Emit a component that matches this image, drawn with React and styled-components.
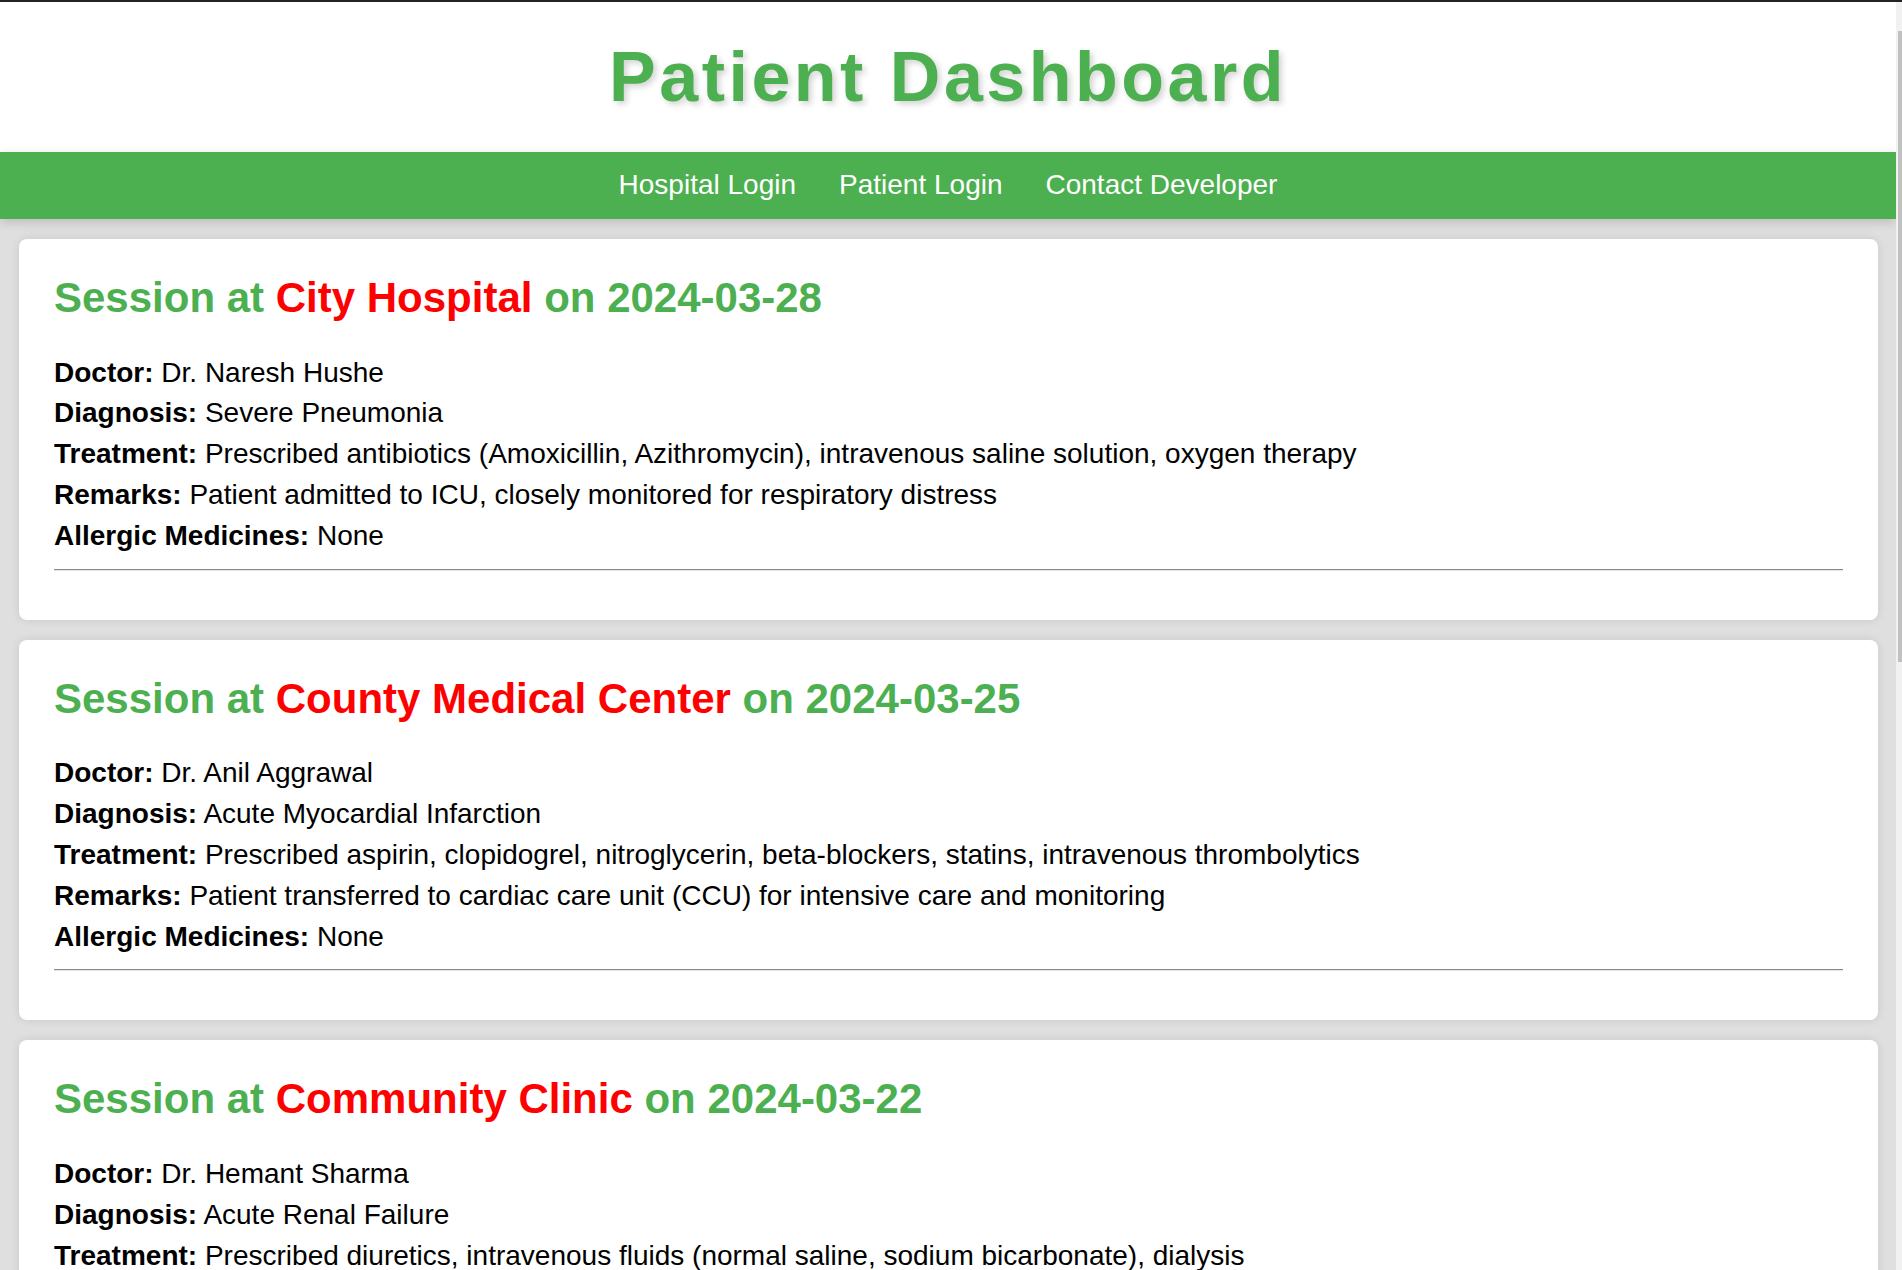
import React from "react";
import styled, { createGlobalStyle } from "styled-components";

const GlobalStyle = createGlobalStyle`
  html, body {
    margin: 0;
    padding: 0;
  }

  body {
    background-color: #dfdfdf;
    font-family: "Liberation Sans", Arial, sans-serif;
    font-size: 28px;
    color: #000;
    border-top: 2px solid #222;
    overflow: hidden;
  }

  #root {
    margin-right: 6px;
  }
`;

const Header = styled.header`
  background-color: #fff;
  text-align: center;
  padding: 35px 0 34px;
`;

const Title = styled.h1`
  margin: 0;
  font-size: 70px;
  line-height: 80.5px;
  font-weight: bold;
  letter-spacing: 3.5px;
  color: #4caf50;
  text-shadow: 3px 3px 6px rgba(0, 0, 0, 0.18);
`;

const Nav = styled.nav`
  position: relative;
  display: flex;
  justify-content: center;
  background-color: #4caf50;
  padding: 17.5px 0;
  box-shadow: 0 3px 10px rgba(0, 0, 0, 0.16);
`;

const NavLink = styled.a`
  color: #fff;
  text-decoration: none;
  font-size: 28px;
  line-height: 32.2px;
  padding: 0 21.5px;
  cursor: pointer;

  &:hover {
    text-decoration: underline;
  }
`;

const Main = styled.main`
  display: flex;
  flex-direction: column;
  gap: 20px;
  padding: 20px 18px 20px 19px;
`;

const Card = styled.section`
  background-color: #fff;
  border-radius: 8px;
  box-shadow: 0 0 10px rgba(0, 0, 0, 0.1);
  padding: 35px;
`;

const SessionTitle = styled.h2`
  margin: 0 0 34.5px;
  font-size: 42px;
  line-height: 48.3px;
  font-weight: bold;
  color: #4caf50;
`;

const Place = styled.span`
  color: #ff0000;
`;

const Fields = styled.div`
  display: flex;
  flex-direction: column;
  gap: 8.75px;
`;

const Field = styled.p`
  margin: 0;
  line-height: 32.2px;

  strong {
    font-weight: bold;
  }
`;

const Divider = styled.hr`
  margin: 16px 0 14px;
  border: 0;
  border-top: 1px solid #8c8c8c;
  border-bottom: 1px solid #e4e4e4;
`;

// the thin scrollbar seen on the right of the window
const ScrollTrack = styled.div`
  position: fixed;
  top: 2px;
  right: 0;
  bottom: 0;
  width: 6px;
  background-color: #f1f1f1;
`;

const ScrollThumb = styled.div`
  margin: 29px 0 0 2px;
  width: 4px;
  height: 631px;
  background-color: #c1c1c1;
`;

const sessions = [
  {
    hospital: "City Hospital",
    date: "2024-03-28",
    doctor: "Dr. Naresh Hushe",
    diagnosis: "Severe Pneumonia",
    treatment:
      "Prescribed antibiotics (Amoxicillin, Azithromycin), intravenous saline solution, oxygen therapy",
    remarks: "Patient admitted to ICU, closely monitored for respiratory distress",
    allergies: "None",
  },
  {
    hospital: "County Medical Center",
    date: "2024-03-25",
    doctor: "Dr. Anil Aggrawal",
    diagnosis: "Acute Myocardial Infarction",
    treatment:
      "Prescribed aspirin, clopidogrel, nitroglycerin, beta-blockers, statins, intravenous thrombolytics",
    remarks: "Patient transferred to cardiac care unit (CCU) for intensive care and monitoring",
    allergies: "None",
  },
  {
    hospital: "Community Clinic",
    date: "2024-03-22",
    doctor: "Dr. Hemant Sharma",
    diagnosis: "Acute Renal Failure",
    treatment:
      "Prescribed diuretics, intravenous fluids (normal saline, sodium bicarbonate), dialysis",
    remarks: "Patient kept under observation, kidney function tests scheduled",
    allergies: "None",
  },
];

const SessionCard = ({ session }) => (
  <Card>
    <SessionTitle>
      Session at <Place>{session.hospital}</Place> on {session.date}
    </SessionTitle>
    <Fields>
      <Field>
        <strong>Doctor:</strong> {session.doctor}
      </Field>
      <Field>
        <strong>Diagnosis:</strong> {session.diagnosis}
      </Field>
      <Field>
        <strong>Treatment:</strong> {session.treatment}
      </Field>
      <Field>
        <strong>Remarks:</strong> {session.remarks}
      </Field>
      <Field>
        <strong>Allergic Medicines:</strong> {session.allergies}
      </Field>
    </Fields>
    <Divider />
  </Card>
);

const App = () => {
  return (
    <>
      <GlobalStyle />
      <Header>
        <Title>Patient Dashboard</Title>
      </Header>
      <Nav>
        <NavLink href="#hospital-login">Hospital Login</NavLink>
        <NavLink href="#patient-login">Patient Login</NavLink>
        <NavLink href="#contact">Contact Developer</NavLink>
      </Nav>
      <Main>
        {sessions.map((session) => (
          <SessionCard key={session.date} session={session} />
        ))}
      </Main>
      <ScrollTrack>
        <ScrollThumb />
      </ScrollTrack>
    </>
  );
};

export default App;
